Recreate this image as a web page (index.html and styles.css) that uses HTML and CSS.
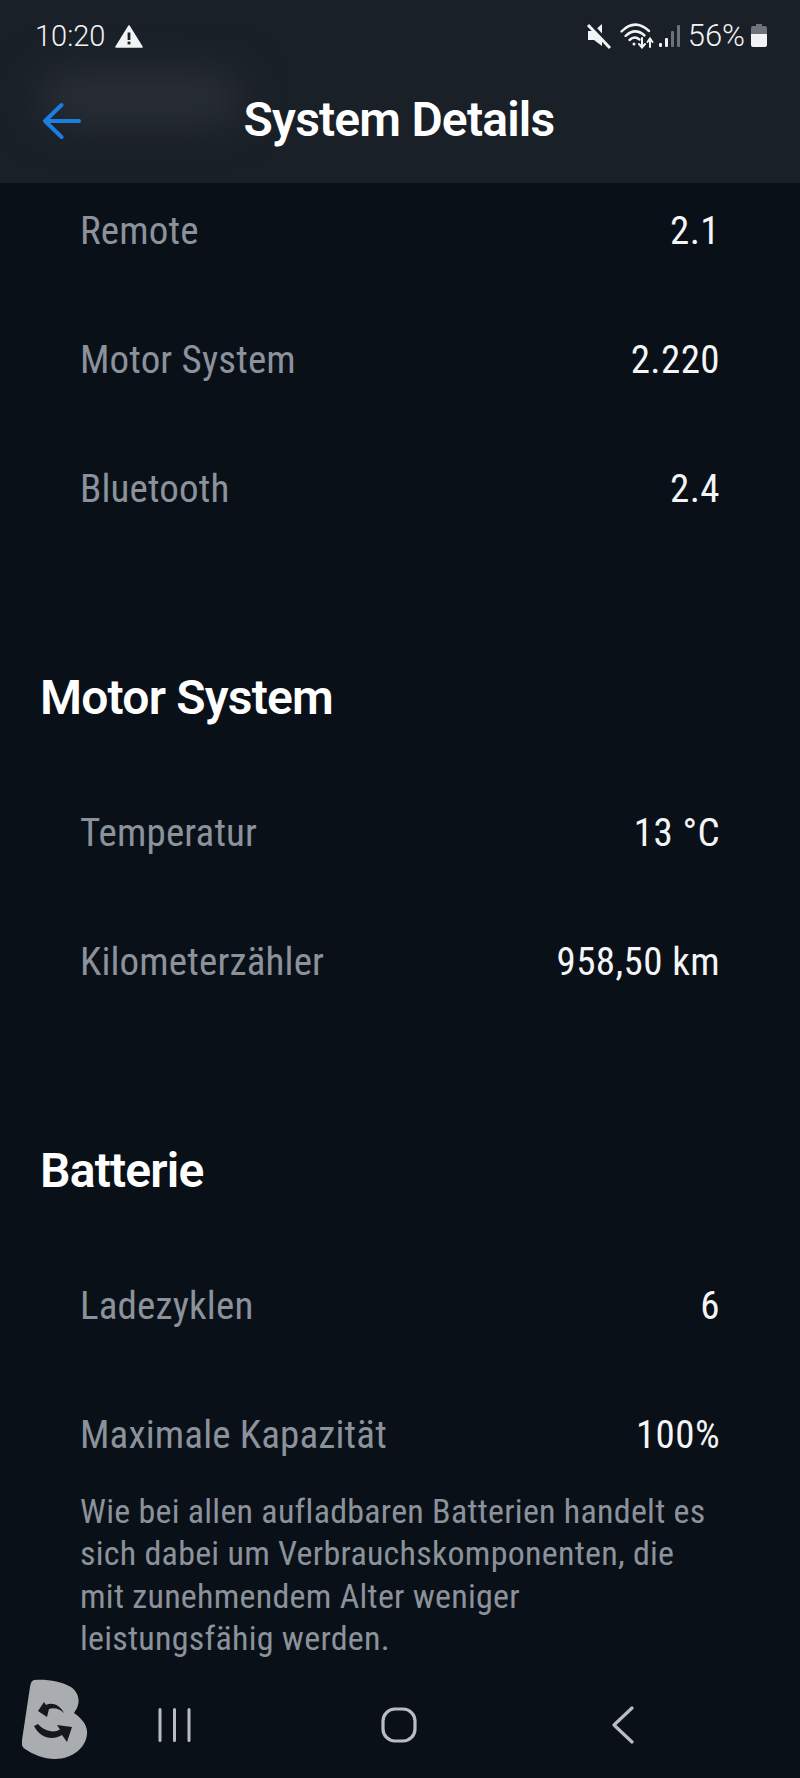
FILE: index.html
```html
<!DOCTYPE html>
<html>
<head>
  <meta charset="UTF-8" />
  <title>System Details</title>
  <link rel="stylesheet" href="styles.css">
</head>
<body>
  <div class="screen">
    <header class="top">
      <div class="smudge"></div>
      <div class="status">
        <div class="status-left">
          <span class="clock">10:20</span>
          <svg class="warn" width="28" height="24" viewBox="0 0 28 24">
            <path d="M14 2 L27 23 H1 Z" fill="#f2f3f4" stroke="#f2f3f4" stroke-width="1.5" stroke-linejoin="round"/>
            <rect x="12.6" y="8.5" width="2.8" height="7.5" fill="#1a2028"/>
            <rect x="12.6" y="17.6" width="2.8" height="2.8" fill="#1a2028"/>
          </svg>
        </div>
        <div class="status-right">
          <svg width="26" height="26" viewBox="0 0 26 26">
            <path d="M2 8 H8 L16 1 V23 L8 17 H2 Z" fill="#f2f3f4"/>
            <path d="M4 1 L25 24" stroke="#1a2028" stroke-width="5"/>
            <path d="M2 2 L24 25" stroke="#f2f3f4" stroke-width="3"/>
          </svg>
          <svg class="wifi" width="34" height="26" viewBox="0 0 34 26" fill="none" stroke="#f2f3f4" stroke-linecap="round">
            <path d="M1.500 8.500 Q15 -5 29 8" stroke-width="2.4"/>
            <path d="M5.500 13 Q15 4 24.500 12.500" stroke-width="2.4"/>
            <path d="M9.500 17 Q14.500 12.500 19.500 16.500" stroke-width="2.4"/>
            <circle cx="14" cy="21" r="1.5" fill="#f2f3f4" stroke="none"/>
            <path d="M22 15 V24 M19 21 L22 24.500 L25 21" stroke-width="2"/>
            <path d="M30 24 V16 M27.500 19 L30 15.500 L32.500 19" stroke-width="2"/>
          </svg>
          <svg class="signal" width="22" height="26" viewBox="0 0 22 26">
            <rect x="1" y="20" width="3" height="4" rx="1" fill="#f2f3f4"/>
            <rect x="7" y="15" width="3" height="9" rx="1" fill="#f2f3f4"/>
            <rect x="13" y="8" width="3" height="16" rx="1" fill="#6d7278"/>
            <rect x="19" y="2" width="3" height="22" rx="1" fill="#6d7278"/>
          </svg>
          <span class="pct">56%</span>
          <svg class="batt" width="16" height="24" viewBox="0 0 16 24">
            <path d="M5 0 H11 V2 H14 Q16 2 16 4 V10 H0 V4 Q0 2 2 2 H5 Z" fill="#6f747a"/>
            <path d="M0 10 H16 V21 Q16 23 14 23 H2 Q0 23 0 21 Z" fill="#f2f3f4"/>
          </svg>
        </div>
      </div>
      <div class="titlebar">
        <svg class="back" width="40" height="38" viewBox="0 0 40 38" fill="none" stroke="#1a7fe0" stroke-width="4" stroke-linecap="round" stroke-linejoin="round">
          <path d="M36 19 H3 M18.500 3 L2 19 L18.500 35"/>
        </svg>
        <h1>System Details</h1>
      </div>
    </header>

    <main class="content">
      <section class="group first">
        <div class="row"><span>Remote</span><span class="val">2.1</span></div>
        <div class="row"><span>Motor System</span><span class="val">2.220</span></div>
        <div class="row"><span>Bluetooth</span><span class="val">2.4</span></div>
      </section>

      <section class="group">
        <h2>Motor System</h2>
        <div class="row"><span>Temperatur</span><span class="val">13 °C</span></div>
        <div class="row"><span>Kilometerzähler</span><span class="val">958,50 km</span></div>
      </section>

      <section class="group">
        <h2>Batterie</h2>
        <div class="row"><span>Ladezyklen</span><span class="val">6</span></div>
        <div class="row"><span>Maximale Kapazität</span><span class="val">100%</span></div>
        <p class="note">Wie bei allen aufladbaren Batterien handelt es sich dabei um Verbrauchskomponenten, die mit zunehmendem Alter weniger leistungsfähig werden.</p>
      </section>
    </main>

    <nav class="navbar">
      <svg class="nav-recent" width="34" height="34" viewBox="0 0 34 34" fill="none" stroke="#b9bcc0" stroke-width="3" stroke-linecap="round">
        <path d="M2 1.500 V32.500 M16.500 1.500 V32.500 M31 1.500 V32.500"/>
      </svg>
      <svg class="nav-home" width="36" height="36" viewBox="0 0 36 36" fill="none" stroke="#b9bcc0" stroke-width="3.2">
        <rect x="2" y="2" width="32" height="32" rx="12"/>
      </svg>
      <svg class="nav-back" width="22" height="38" viewBox="0 0 22 38" fill="none" stroke="#b9bcc0" stroke-width="3.2" stroke-linecap="round" stroke-linejoin="round">
        <path d="M20 2 L2 19 L20 36"/>
      </svg>
    </nav>

    <svg class="logo" width="66" height="82" viewBox="0 0 66 82">
      <path d="M13 2 C25 1 40 4 47 8 C55 12 58 20 56 27 C55 31 53 33 52 35 C59 40 66 47 65 56 C64 70 50 81 33 81 C22 81 10 76 3 71 C0 69 -1 65 0 62 L8 9 C9 4 10 2 13 2 Z" fill="#a9adb0"/>
      <path d="M22 24 L24 27 C30 24 38 27 42 35 C38 31 32 29 27 31 L25 39 L16 33 Z" fill="#14181e"/>
      <path d="M12 48 L16 46 C21 52 31 56 38 51.500 L35 47 L50 49 L45 64 L40 57 C30 63 18 60 12 48 Z" fill="#14181e"/>
    </svg>
  </div>
</body>
</html>
```

FILE: styles.css
```css
* {
  box-sizing: border-box;
}

html,
body {
  margin: 0;
  padding: 0;
}

body {
  width: 800px;
  height: 1778px;
  overflow: hidden;
  background: #0a1018;
  font-family: "Roboto", sans-serif;
}

.screen {
  position: relative;
  height: 1778px;
  display: flex;
  flex-direction: column;
}

/* header + status bar */
.top {
  position: relative;
  height: 183px;
  background: #1a2028;
  overflow: hidden;
}

.smudge {
  position: absolute;
  left: 45px;
  top: 78px;
  width: 190px;
  height: 40px;
  background: #2e333b;
  filter: blur(22px);
}

.status {
  position: relative;
  height: 70px;
  padding: 18px 33px 0 35px;
  display: flex;
  justify-content: space-between;
  align-items: flex-start;
  font-weight: 300;
  font-size: 29px;
  line-height: 36px;
  color: #f2f3f4;
}

.status-left,
.status-right {
  display: flex;
  align-items: center;
}

.warn {
  margin-left: 10px;
}

.wifi {
  margin-left: 8px;
}

.signal {
  margin-left: 4px;
}

.pct {
  margin-left: 8px;
  font-size: 31px;
}

.batt {
  margin-left: 6px;
}

.titlebar {
  position: relative;
  height: 113px;
  padding-left: 43px;
  display: flex;
  align-items: flex-start;
}

.back {
  margin-top: 32px;
}

.titlebar h1 {
  position: absolute;
  left: 0;
  right: 2px;
  top: 25px;
  margin: 0;
  text-align: center;
  font-size: 48px;
  letter-spacing: -0.8px;
  line-height: 50px;
  font-weight: 600;
  color: #fff;
}

/* list */
.content {
  flex: 1;
  padding: 1px 80px 0 40px;
}

.group {
  margin-top: 165px;
}

.group.first {
  margin-top: 27px;
}

.group h2 {
  margin: 0 0 91px;
  font-size: 48px;
  letter-spacing: -0.8px;
  line-height: 48px;
  font-weight: 600;
  color: #fff;
}

.row {
  height: 40px;
  margin: 0 0 89px 40px;
  display: flex;
  justify-content: space-between;
  align-items: center;
  font-size: 39px;
  font-stretch: 85%;
  letter-spacing: 0.15px;
  line-height: 40px;
  color: #8c929b;
}

.group .row:last-child {
  margin-bottom: 0;
}

.val {
  letter-spacing: 0.4px;
  color: #f4f5f6;
}

.note {
  margin: -54px 10px 0 40px;
  font-size: 34px;
  font-stretch: 85%;
  letter-spacing: 0.25px;
  line-height: 42.4px;
  color: #8c929b;
}

/* android nav */
.navbar {
  position: absolute;
  left: 0;
  right: 0;
  bottom: 0;
  height: 98px;
}

.navbar svg {
  position: absolute;
}

.nav-recent {
  left: 158px;
  top: 28px;
}

.nav-home {
  left: 381px;
  top: 27px;
}

.nav-back {
  left: 612px;
  top: 26px;
}

.logo {
  position: absolute;
  left: 22px;
  top: 1678px;
}
```
